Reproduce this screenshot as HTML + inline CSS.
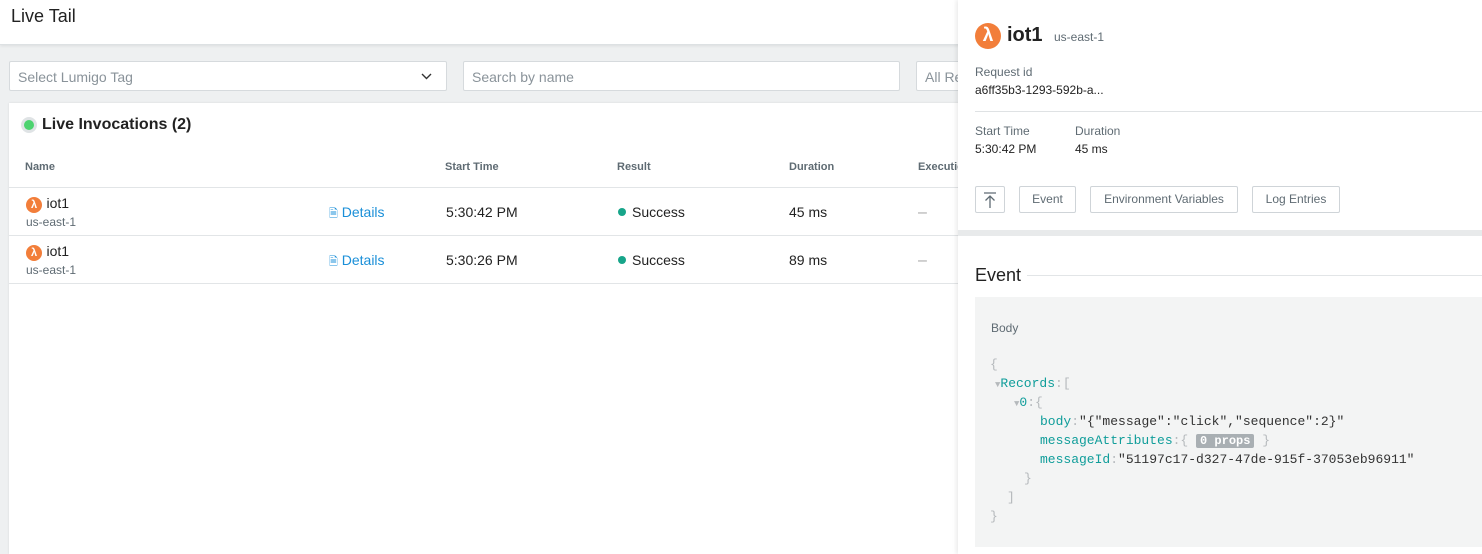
<!DOCTYPE html>
<html><head><meta charset="utf-8"><style>
*{box-sizing:border-box;margin:0;padding:0}
html,body{width:1482px;height:554px;overflow:hidden}
body{font-family:"Liberation Sans",Arial,sans-serif;background:#eef0f1;position:relative;color:#222}
.hdr{position:absolute;left:0;top:0;width:1482px;height:45px;background:#fff;border-bottom:1px solid #dde1e3;box-shadow:0 1px 3px rgba(0,0,0,.08)}
.hdr h1{position:absolute;left:11px;top:6px;font-size:18px;font-weight:normal;color:#222}
.inp{position:absolute;top:61px;height:30px;background:#fff;border:1px solid #d6dadd;border-radius:2px;font-size:14px;color:#8a939a;padding:7px 8px}
.card{position:absolute;left:9px;top:103px;width:1000px;height:451px;background:#fff;box-shadow:0 0 2px rgba(0,0,0,.1)}
.abs{position:absolute}
.th{font-size:11px;font-weight:bold;color:#5f6b73;top:161px}
.row{position:absolute;left:9px;width:960px;border-top:1px solid #e2e5e7}
.lam{display:inline-block;width:16px;height:16px;border-radius:50%;background:#f27e3a;color:#fff;font-size:11px;line-height:16px;text-align:center;font-weight:bold}
.cell{font-size:14px;color:#222}
.reg{font-size:12px;color:#5f6b73}
.det{font-size:14px;color:#1a8fd8}
.dot{display:inline-block;width:8px;height:8px;border-radius:50%;background:#17a58a;margin-right:6px;vertical-align:1px}
.panel{position:absolute;left:958px;top:0;width:524px;height:554px;background:#fff;box-shadow:-2px 0 4px rgba(0,0,0,.08)}
.lbl{font-size:12px;color:#5f6b73}
.val{font-size:12px;color:#222}
.btn{position:absolute;top:186px;height:27px;border:1px solid #cfd4d8;border-radius:2px;font-size:12px;color:#5f6b73;text-align:center;line-height:25px;background:#fff}
.code{position:absolute;left:17px;top:297px;width:510px;height:250px;background:#f3f4f4}
.mono{font-family:"Liberation Mono",monospace;font-size:13px;position:absolute;white-space:pre;line-height:19px}
.k{color:#0f9d9a}.p{color:#b5b9bc}.s{color:#333}
</style></head><body>
<div class="hdr"><h1>Live Tail</h1></div>
<div class="inp" style="left:9px;width:438px">Select Lumigo Tag<svg style="position:absolute;right:14px;top:11px" width="11" height="7" viewBox="0 0 11 7"><path d="M1 1l4.5 4.5L10 1" stroke="#333" stroke-width="1.4" fill="none"/></svg></div>
<div class="inp" style="left:463px;width:437px">Search by name</div>
<div class="inp" style="left:916px;width:60px">All Re</div>
<div class="card"></div>
<div class="abs" style="left:21px;top:117px;width:16px;height:16px;border-radius:50%;background:#dfe3e5"></div>
<div class="abs" style="left:24px;top:120px;width:10px;height:10px;border-radius:50%;background:#4cd36f"></div>
<div class="abs" style="left:42px;top:116px;font-size:16px;font-weight:bold;color:#222">Live Invocations (2)</div>
<div class="abs th" style="left:25px">Name</div>
<div class="abs th" style="left:445px">Start Time</div>
<div class="abs th" style="left:617px">Result</div>
<div class="abs th" style="left:789px">Duration</div>
<div class="abs th" style="left:918px">Execution</div>
<div class="row" style="top:187px"></div>
<div class="row" style="top:235px"></div>
<div class="row" style="top:283px"></div>
<div class="abs" style="left:26px;top:195px"><span class="lam">λ</span> <span class="cell">iot1</span></div>
<div class="abs reg" style="left:26px;top:215px">us-east-1</div>
<div class="abs det" style="left:329px;top:204px"><span style="font-size:11px">🗎</span> Details</div>
<div class="abs cell" style="left:446px;top:204px">5:30:42 PM</div>
<div class="abs cell" style="left:618px;top:204px"><span class="dot"></span>Success</div>
<div class="abs cell" style="left:789px;top:204px">45 ms</div>
<div class="abs" style="left:918px;top:204px;color:#aaa">–</div>
<div class="abs" style="left:26px;top:243px"><span class="lam">λ</span> <span class="cell">iot1</span></div>
<div class="abs reg" style="left:26px;top:263px">us-east-1</div>
<div class="abs det" style="left:329px;top:252px"><span style="font-size:11px">🗎</span> Details</div>
<div class="abs cell" style="left:446px;top:252px">5:30:26 PM</div>
<div class="abs cell" style="left:618px;top:252px"><span class="dot"></span>Success</div>
<div class="abs cell" style="left:789px;top:252px">89 ms</div>
<div class="abs" style="left:918px;top:252px;color:#aaa">–</div>

<div class="panel">
<div class="abs" style="left:17px;top:23px;width:26px;height:26px;border-radius:50%;background:#f27e3a;color:#fff;font-size:19px;font-weight:bold;text-align:center;line-height:26px">λ</div>
<div class="abs" style="left:49px;top:24px;font-size:20px;font-weight:bold;color:#222">iot1</div>
<div class="abs" style="left:96px;top:30px;font-size:12px;color:#5f6b73">us-east-1</div>
<div class="abs lbl" style="left:17px;top:65px">Request id</div>
<div class="abs val" style="left:17px;top:83px">a6ff35b3-1293-592b-a...</div>
<div class="abs" style="left:17px;top:111px;width:507px;border-top:1px solid #dfe2e4"></div>
<div class="abs lbl" style="left:17px;top:124px">Start Time</div>
<div class="abs val" style="left:17px;top:142px">5:30:42 PM</div>
<div class="abs lbl" style="left:117px;top:124px">Duration</div>
<div class="abs val" style="left:117px;top:142px">45 ms</div>
<div class="btn" style="left:17px;width:30px"><svg width="16" height="18" viewBox="0 0 16 18" style="margin-top:4px"><path d="M2 2h12M8 5v12M3.5 9.5L8 5l4.5 4.5" stroke="#5f6b73" stroke-width="1.3" fill="none"/></svg></div>
<div class="btn" style="left:61px;width:57px">Event</div>
<div class="btn" style="left:132px;width:148px">Environment Variables</div>
<div class="btn" style="left:294px;width:88px">Log Entries</div>
<div class="abs" style="left:0;top:230px;width:524px;height:6px;background:#e8eaeb"></div>
<div class="abs" style="left:17px;top:265px;font-size:18px;color:#222">Event</div>
<div class="abs" style="left:69px;top:275px;width:455px;border-top:1px solid #e2e5e7"></div>
<div class="code">
<div class="abs" style="left:16px;top:24px;font-size:12px;color:#5f6b73">Body</div>
<div class="mono p" style="left:15px;top:58px">{</div>
<div class="mono" style="left:20px;top:77px"><span class="p" style="font-size:9px">▼</span><span class="k">Records</span><span class="p">:[</span></div>
<div class="mono" style="left:39px;top:96px"><span class="p" style="font-size:9px">▼</span><span class="k">0</span><span class="p">:{</span></div>
<div class="mono" style="left:65px;top:115px"><span class="k">body</span><span class="p">:</span><span class="s">"{"message":"click","sequence":2}"</span></div>
<div class="mono" style="left:65px;top:134px"><span class="k">messageAttributes</span><span class="p">:{ </span><span style="background:#a9afb3;color:#fff;padding:0 4px;border-radius:2px;font-weight:bold;font-size:12px">0 props</span><span class="p"> }</span></div>
<div class="mono" style="left:65px;top:153px"><span class="k">messageId</span><span class="p">:</span><span class="s">"51197c17-d327-47de-915f-37053eb96911"</span></div>
<div class="mono p" style="left:49px;top:172px">}</div>
<div class="mono p" style="left:32px;top:191px">]</div>
<div class="mono p" style="left:15px;top:210px">}</div>
</div>
</div>
</body></html>
